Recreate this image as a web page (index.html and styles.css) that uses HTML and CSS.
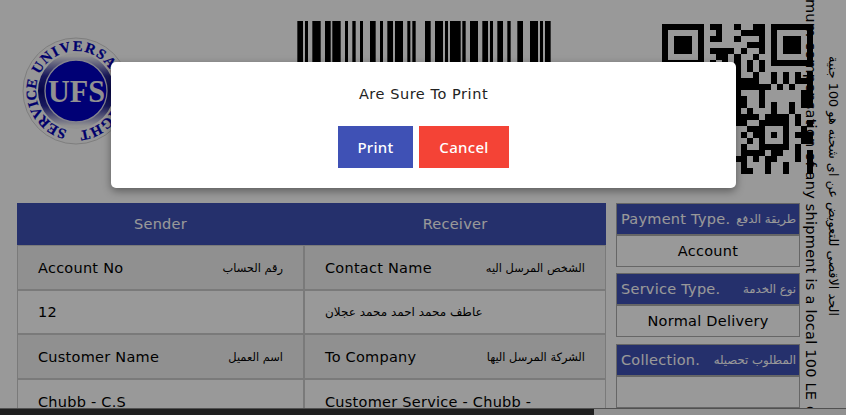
FILE: index.html
```html
<!DOCTYPE html>
<html lang="en">
<head>
<meta charset="utf-8">
<title>Print shipment</title>
<link rel="stylesheet" href="styles.css">
</head>
<body>
<main class="page">
  <header class="top">
    <svg class="logo" width="108" height="108" viewBox="-54 -54 108 108">
      <defs>
        <linearGradient id="ring" x1="0" y1="0" x2="0" y2="1">
          <stop offset="0.04" stop-color="#f4f4f4"/><stop offset="0.3" stop-color="#2a2a9c"/>
          <stop offset="0.5" stop-color="#0b0b78"/><stop offset="0.7" stop-color="#2a2a9c"/><stop offset="0.96" stop-color="#f4f4f4"/>
        </linearGradient>
        <path id="circle" d="M40 0A40 40 0 0 1 -40 0A40 40 0 0 1 40 0"/>
      </defs>
      <circle r="53" fill="#fcfcfc" stroke="#d2d2d2"/>
      <circle r="38" fill="url(#ring)"/>
      <circle r="31" fill="#0000c4" stroke="#dcdcec" stroke-width="1.3"/>
      <g class="logo-ring">
        <text transform="rotate(204)"><textPath href="#circle" textLength="97">UNIVERSAL</textPath></text>
        <text transform="rotate(2)"><textPath href="#circle" textLength="58">FLIGHT</textPath></text>
        <text transform="rotate(103)"><textPath href="#circle" textLength="65">SERVICE</textPath></text>
      </g>
      <text class="logo-name" x="-28" y="11" textLength="57" lengthAdjust="spacingAndGlyphs">UFS</text>
    </svg>
    <svg class="barcode" id="barcode" width="254" height="110" viewBox="0 0 254 110"></svg>
    <svg class="qr" id="qr" width="151" height="150" viewBox="0 0 25 25" preserveAspectRatio="none"></svg>
  </header>
  <div class="content">
    <section class="parties">
      <div class="party-head"><span>Sender</span></div>
      <div class="party-head"><span>Receiver</span></div>
      <div class="cell label"><span>Account No</span><span class="ar" dir="rtl">رقم الحساب</span></div>
      <div class="cell label"><span>Contact Name</span><span class="ar" dir="rtl">الشخص المرسل اليه</span></div>
      <div class="cell">12</div>
      <div class="cell"><span class="ar" dir="rtl">عاطف محمد احمد محمد عجلان</span></div>
      <div class="cell label"><span>Customer Name</span><span class="ar" dir="rtl">اسم العميل</span></div>
      <div class="cell label"><span>To Company</span><span class="ar" dir="rtl">الشركة المرسل اليها</span></div>
      <div class="cell">Chubb - C.S</div>
      <div class="cell">Customer Service - Chubb -</div>
    </section>
    <aside class="details">
      <div class="detail"><div class="detail-head"><span>Payment Type.</span><span class="ar" dir="rtl">طريقة الدفع</span></div><div class="detail-value">Account</div></div>
      <div class="detail"><div class="detail-head"><span>Service Type.</span><span class="ar" dir="rtl">نوع الخدمة</span></div><div class="detail-value">Normal Delivery</div></div>
      <div class="detail"><div class="detail-head"><span>Collection.</span><span class="ar" dir="rtl">المطلوب تحصيله</span></div><div class="detail-value"></div></div>
    </aside>
  </div>
  <svg class="notice" width="46" height="408" viewBox="0 0 46 408">
    <text transform="translate(6 -1) rotate(90)" textLength="401">mum compensation of any shipment is a local 100 LE</text>
    <text transform="translate(6 406) rotate(90)">o</text>
    <text class="notice-ar" transform="translate(29 316) rotate(90)" direction="rtl" textLength="260" lengthAdjust="spacingAndGlyphs">الحد الاقصى للتعويض عن اى شحنه هو 100 جنية</text>
  </svg>
</main>
<div class="scrollbar"><div class="thumb"></div></div>
<div class="overlay">
  <div class="dialog">
    <p>Are Sure To Print</p>
    <div class="actions"><button class="print">Print</button><button class="cancel">Cancel</button></div>
  </div>
</div>
<script src="codes.js"></script>
</body>
</html>
```
FILE: codes.js
```js
const NS = 'http://www.w3.org/2000/svg';
function rect(parent, x, y, w, h) {
  const r = document.createElementNS(NS, 'rect');
  Object.entries({ x, y, width: w, height: h }).forEach(([k, v]) => r.setAttribute(k, v));
  parent.appendChild(r);
}

// Bars as [start, end] in thirds of a pixel.
const bars = [[1,18],[24,33],[46,71],[84,101],[106,131],[144,153],[166,176],[189,198],[219,236],[249,258],[271,288],[294,318],[331,340],[346,356],[384,401],[414,438],[444,453],[459,491],[496,506],[519,543],[556,573],[579,588],[601,618],[631,641],[661,678],[699,723],[729,738],[744,761]];
bars.forEach(([a, b]) => rect(document.getElementById('barcode'), a / 3, 0, (b - a) / 3, 110));

const modules = [
  '#######.##..#..##.#######',
  '#.....#..#...####.#.....#',
  '#.###.#.##..#...#.#.###.#',
  '#.###.#.......###.#.###.#',
  '#.###.#.####.#..#.#.###.#',
  '#.....#..##.#..#..#.....#',
  '#######.#.#.#.#.#.#######',
  '............#.#.#........',
  '............#..#..#.#.#.#',
  '............####..#.#.###',
  '............######.#.#..#',
  '............#...#......##',
  '............##..#......##',
  '............##..#.#..#.##',
  '............#.#...#..#...',
  '............####.####.#..',
  '............##..#####.#.#',
  '..............###...#..#.',
  '.............#.##.#.#.###',
  '..............#.#...#..##',
  '.............#..#####.#..',
  '.............####.##..#.#',
  '............##.#.##...#.#',
  '.............#...#..#...#',
  '.............##..#..#...#'
];
modules.forEach((row, y) => [...row].forEach((c, x) => {
  if (c === '#') rect(document.getElementById('qr'), x, y, 1, 1);
}));
```
FILE: styles.css
```css
* { box-sizing: border-box; }
body { margin: 0; width: 846px; height: 415px; overflow: hidden; background: #fff; color: #000; font: 14.5px "DejaVu Sans", sans-serif; letter-spacing: .25px; }
.page { position: relative; height: 408px; overflow: hidden; }
.top { display: flex; height: 203px; padding: 21px 33px 0 22px; align-items: flex-start; }
.logo { margin-top: 16px; letter-spacing: 0; }
.logo-ring { fill: #0000b4; stroke: #0000b4; stroke-width: .25px; font: bold 14.5px "Liberation Serif", serif; }
.logo-name { fill: #f2f2f2; font: bold 31px "Liberation Serif", serif; }
.barcode { margin-left: 167px; }
.qr { margin: 3px 0 0 111px; shape-rendering: crispEdges; flex: none; }
.content { display: flex; gap: 10px; padding-left: 17px; }
.parties { display: grid; grid-template-columns: 287px 302px; grid-template-rows: 42px 45px 44px 45px 45px; }
.party-head { display: flex; align-items: center; justify-content: center; background: #3f51b5; color: #fff; }
.cell { display: flex; align-items: center; justify-content: space-between; padding: 0 20px; border: 1px solid #ccc; white-space: nowrap; }
.label { background: #f1f1f1; }
.ar { font-size: 12px; letter-spacing: 0; }
.label .ar { font-size: 11.4px; }
.details { display: flex; flex-direction: column; gap: 6px; width: 184px; }
.detail { height: 64px; }
.detail:last-child { margin-top: 1px; }
.detail-head, .detail-value { display: flex; height: 32px; align-items: center; border: 1px solid #aaa; }
.detail-head { justify-content: space-between; padding: 0 3px 0 4px; background: #3f51b5; color: #fff; white-space: nowrap; }
.detail-head .ar { font-size: 11.7px; }
.detail-value { justify-content: center; }
.notice { position: absolute; left: 800px; top: 0; font-size: 14.5px; letter-spacing: 0; }
.notice-ar { font-size: 13px; }
.scrollbar { height: 7px; background: #f1f1f1; border-top: 1px solid #888; }
.thumb { width: 594px; height: 6px; background: #343434; }
.overlay { position: absolute; inset: 0; background: rgba(0, 0, 0, .4); }
.dialog { width: 625px; height: 126px; margin: 62px 0 0 111px; padding: 22px 0 0; border-radius: 5px; background: #fff; box-shadow: 0 3px 9px rgba(0, 0, 0, .4); text-align: center; }
.dialog p { margin: 0; height: 42px; line-height: 20px; letter-spacing: .55px; color: #222; }
.actions { display: flex; justify-content: center; gap: 6px; }
.actions button { height: 42px; padding: 0; border: 0; color: #fff; font: 500 15px "Noto Sans", sans-serif; letter-spacing: .3px; }
.print { width: 75px; background: #3f51b5; }
.cancel { width: 90px; background: #f44336; }
```
